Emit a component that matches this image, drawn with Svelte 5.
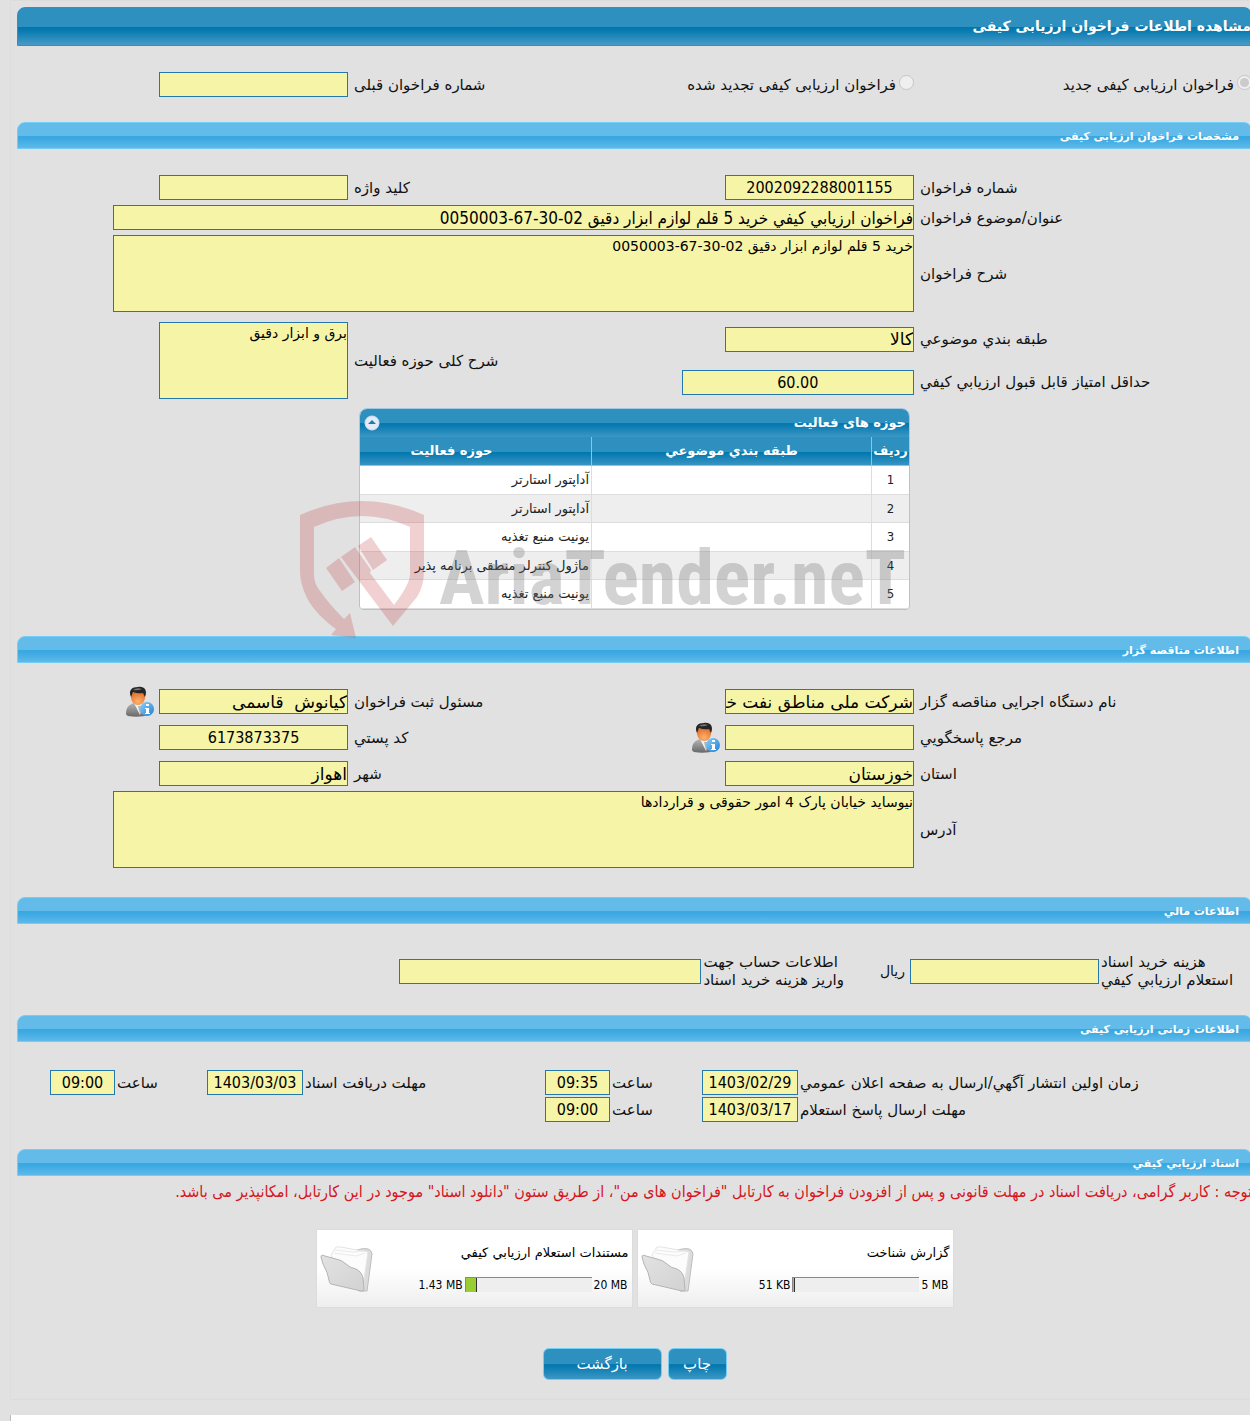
<script lang="ts">
	type FileCard = { title: string; used: string; limit: string; percent: number };

	const activities = [
		'آداپتور استارتر',
		'آداپتور استارتر',
		'یونیت منبع تغذیه',
		'ماژول کنترلر منطقی برنامه پذیر',
		'یونیت منبع تغذیه'
	];

	const files: FileCard[] = [
		{ title: 'گزارش شناخت', used: '51 KB', limit: '5 MB', percent: 1 },
		{ title: 'مستندات استعلام ارزيابي کيفي', used: '1.43 MB', limit: '20 MB', percent: 9 }
	];

	let open = $state(true);
</script>

{#snippet person(id: string)}
	<svg viewBox="0 0 28 31" width="28" height="31" aria-hidden="true">
		<defs>
			<linearGradient id="{id}-suit" x1="0" y1="0" x2="0" y2="1">
				<stop offset="0" stop-color="#b5b5b5" />
				<stop offset="1" stop-color="#686868" />
			</linearGradient>
			<radialGradient id="{id}-face" cx="0.5" cy="0.75" r="0.7">
				<stop offset="0" stop-color="#ffb36b" />
				<stop offset="1" stop-color="#e0702f" />
			</radialGradient>
			<linearGradient id="{id}-info" x1="0" y1="0" x2="1" y2="1">
				<stop offset="0" stop-color="#8fd0fa" />
				<stop offset="1" stop-color="#1c7fd6" />
			</linearGradient>
		</defs>
		<path d="M0 28C0 22 2 19 8 17h9c5 2 8 5 7 12q-12 3-22 1-2-1-2-2z" fill="url(#{id}-suit)" />
		<path d="M8 17l6 12 3-12q-4 3-9 0z" fill="#f2f2f2" />
		<path d="M12 20l2 9 2-9z" fill="#b5b5b5" />
		<path d="M5 7q6-3 14 0c1 7-2 12-7 12S4 14 5 7z" fill="url(#{id}-face)" />
		<path d="M5 11C2 4 6 1 12 1c6-1 10 3 7 10L17 7q-5 1-10-1z" fill="#252525" />
		<path d="M7 4q4-3 9-1-4 2-9 1z" fill="#777" />
		<circle cx="21" cy="23" r="7" fill="url(#{id}-info)" />
		<path d="M20 18h3v2h-3zM19 22h4v5h1v1h-5v-1h1v-4h-1z" fill="#fff" />
	</svg>
{/snippet}

{#snippet folder(id: string)}
	<svg viewBox="0 0 56 52" width="56" height="52" aria-hidden="true">
		<defs>
			<linearGradient id={id} x1="0" y1="0" x2="1" y2="1">
				<stop offset="0" stop-color="#e2e2e2" />
				<stop offset="1" stop-color="#d2d2d2" />
			</linearGradient>
		</defs>
		<path d="M33 8l8-2q10-2 11 5l-5 37-8 0z" fill="#dcdcdc" stroke="#bdbdbd" />
		<path d="M11 12l5-8 5 0 27 5-5 34-24-12z" fill="#fcfcfc" stroke="#e4e4e4" />
		<path d="M14 10l22 3 9-3M15 7l18 2 12-1" fill="none" stroke="#ebebeb" />
		<path d="M1 14q0-3 4-1l11 3q6 1 10 5t10 5q6 3 7 9l1 11q0 3-3 2L11 41q-2-1-2-4-1-7-6-16z" fill="url(#{id})" stroke="#b4b4b4" />
	</svg>
{/snippet}

<div class="screen" dir="rtl" lang="fa">
	<main class="page">
		<h1>مشاهده اطلاعات فراخوان ارزیابی کیفی</h1>

		<div class="form kinds">
			<label class="kind"><input type="radio" name="kind" checked disabled /><span>فراخوان ارزیابی کیفی جدید</span></label>
			<label class="kind second"><input type="radio" name="kind" disabled /><span>فراخوان ارزیابی کیفی تجدید شده</span></label>
			<label class="mid" for="previous">شماره فراخوان قبلی</label>
			<input id="previous" class="field" readonly />
		</div>

		<h2>مشخصات فراخوان ارزیابی کیفی</h2>
		<div class="form">
			<label for="number">شماره فراخوان</label>
			<input id="number" class="field number" value="2002092288001155" readonly />
			<label for="keyword">کلید واژه</label>
			<input id="keyword" class="field" readonly />

			<label class="start" for="subject">عنوان/موضوع فراخوان</label>
			<input id="subject" class="field wide" value="فراخوان ارزيابي کيفي خرید 5 قلم لوازم ابزار دقیق 02-30-67-0050003" readonly />

			<label class="start" for="description">شرح فراخوان</label>
			<textarea id="description" class="field wide" readonly>خرید 5 قلم لوازم ابزار دقیق 02-30-67-0050003</textarea>
		</div>

		<div class="form split">
			<label class="category" for="category">طبقه بندي موضوعي</label>
			<input id="category" class="field category-field" value="کالا" readonly />
			<label class="scope" for="scope">شرح کلی حوزه فعالیت</label>
			<textarea id="scope" class="field scope-field" readonly>برق و ابزار دقیق</textarea>
			<label class="start" for="score">حداقل امتیاز قابل قبول ارزیابي کیفي</label>
			<input id="score" class="field score number" value="60.00" readonly />
		</div>

		<div class="activity">
			<div class="panel-wrap">
				<div class="panel">
					<div class="panel-title">
						<span>حوزه های فعالیت</span>
						<button class="toggle" aria-label="جمع کردن" aria-expanded={open} onclick={() => (open = !open)}>
							<svg viewBox="0 0 16 16" width="16" height="16" aria-hidden="true">
								<circle cx="8" cy="8" r="7" fill="#e3ebf6" stroke="#d5dff0" />
								<path d="M4 9l4-4 4 4z" fill="#1b7eb3" />
							</svg>
						</button>
					</div>
					{#if open}
						<table>
							<thead>
								<tr>
									<th class="col-index">ردیف</th>
									<th>طبقه بندي موضوعي</th>
									<th class="col-area">حوزه فعالیت</th>
								</tr>
							</thead>
							<tbody>
								{#each activities as activity, i}
									<tr>
										<td class="col-index">{i + 1}</td>
										<td></td>
										<td>{activity}</td>
									</tr>
								{/each}
							</tbody>
						</table>
					{/if}
				</div>

				<svg class="watermark" viewBox="0 0 610 150" width="610" height="150" direction="ltr" aria-hidden="true">
					<g fill="#c1272d" fill-opacity="0.22">
						<path
							d="M2 23Q64-5 126 23V78Q126 94 119 105L95 134 43 65 57 55 73 78 72 81 96 113Q112 92 112 82V35Q64 13 16 35V82Q16 92 22 99C30 110 38 119 46 127L52 121 58 146 33 143 38 137C28 130 15 118 9 106Q2 92 2 79z"
						/>
						<path d="M28 76l13-10 16 24-13 9zM60 54l13-9 16 23-14 10z" />
					</g>
					<text x="141" y="112" class="watermark-text">AriaTender.neT</text>
				</svg>
			</div>
		</div>

		<h2>اطلاعات مناقصه گزار</h2>
		<div class="form owner">
			<label for="agency">نام دستگاه اجرایی مناقصه گزار</label>
			<input id="agency" class="field" value="شرکت ملی مناطق نفت خیز جنوب" readonly />
			<label for="registrar">مسئول ثبت فراخوان</label>
			<div class="with-icon">
				<input id="registrar" class="field" value="کیانوش  قاسمی" readonly />
				<button class="person" aria-label="اطلاعات مسئول">{@render person('registrar-icon')}</button>
			</div>

			<label class="start" for="contact">مرجع پاسخگویي</label>
			<div class="with-icon">
				<input id="contact" class="field" readonly />
				<button class="person" aria-label="اطلاعات مرجع">{@render person('contact-icon')}</button>
			</div>
			<label for="postal">کد پستي</label>
			<input id="postal" class="field number" value="6173873375" readonly />

			<label class="start" for="province">استان</label>
			<input id="province" class="field" value="خوزستان" readonly />
			<label for="city">شهر</label>
			<input id="city" class="field" value="اهواز" readonly />
		</div>
		<div class="form address">
			<label for="address">آدرس</label>
			<textarea id="address" class="field wide" readonly>نیوساید خیابان پارک 4 امور حقوقی و قراردادها</textarea>
		</div>

		<h2>اطلاعات مالي</h2>
		<div class="finance">
			<label for="fee">هزینه خرید اسناد<br />استعلام ارزیابي کیفي</label>
			<input id="fee" class="field" readonly />
			<span class="unit">ریال</span>
			<label for="account">اطلاعات حساب جهت<br />واریز هزینه خرید اسناد</label>
			<input id="account" class="field long" readonly />
		</div>

		<h2>اطلاعات زمانی ارزیابی کیفی</h2>
		<div class="times">
			<label for="publish">زمان اولین انتشار آگهي/ارسال به صفحه اعلان عمومي</label>
			<input id="publish" class="field number" value="1403/02/29" readonly />
			<label for="publish-time">ساعت</label>
			<input id="publish-time" class="field number" value="09:35" readonly />
			<label for="receive">مهلت دریافت اسناد</label>
			<input id="receive" class="field number" value="1403/03/03" readonly />
			<label for="receive-time">ساعت</label>
			<input id="receive-time" class="field number" value="09:00" readonly />

			<label class="start" for="reply">مهلت ارسال پاسخ استعلام</label>
			<input id="reply" class="field number" value="1403/03/17" readonly />
			<label for="reply-time">ساعت</label>
			<input id="reply-time" class="field number" value="09:00" readonly />
		</div>

		<h2>اسناد ارزیابي کیفي</h2>
		<p class="note">
			توجه : کاربر گرامی، دریافت اسناد در مهلت قانونی و پس از افزودن فراخوان به کارتابل "فراخوان های من"، از طریق ستون "دانلود اسناد" موجود در این کارتابل، امکانپذیر می باشد.
		</p>

		<div class="files">
			{#each files as file, i}
				<div class="file">
					<div class="file-info">
						<span class="file-title">{file.title}</span>
						<div class="usage" dir="ltr">
							<span>{file.used}</span>
							<div class="bar"><div class="bar-fill" style="width: {file.percent}%"></div></div>
							<span>{file.limit}</span>
						</div>
					</div>
					{@render folder(`folder-${i}`)}
				</div>
			{/each}
		</div>

		<div class="actions">
			<button class="action">چاپ</button>
			<button class="action back">بازگشت</button>
		</div>
	</main>
	<footer></footer>
</div>

<style>
	:global(body) {
		background: #e1e1e1;
	}

	.screen {
		overflow: hidden;
		font-family: 'DejaVu Sans', sans-serif;
		font-size: 15px;
		line-height: 18px;
		color: #111;
	}

	.page {
		box-sizing: border-box;
		margin: 0 -2px 15px 10px;
		padding: 6px 0 19px 6px;
		border: 1px solid #dcdcdc;
		border-right: 0;
	}

	h1,
	h2 {
		box-sizing: border-box;
		margin: 0;
		border: 1px solid #2b8fd0;
		border-radius: 8px 8px 0 0;
		background-origin: border-box;
		color: #fff;
	}

	h1 {
		height: 39px;
		font-size: 14px;
		line-height: 37px;
		background-image: linear-gradient(#2e90be 50%, #0076ae 52%, #0b7bb1 62%, #4b9dc9);
	}

	h2 {
		height: 27px;
		padding-right: 12px;
		border-color: #74cdf5;
		font-size: 11px;
		line-height: 28px;
		background-image: linear-gradient(#63bbea 50%, #38a7e0 52%, #3ca9e2 62%, #62bbea);
	}

	input,
	textarea,
	button {
		font: inherit;
	}

	.field {
		box-sizing: border-box;
		width: 100%;
		min-width: 0;
		height: 25px;
		margin: 0;
		padding: 0;
		border: 1px solid #2478ae;
		border-radius: 0;
		outline: 0;
		background: #f6f4a6;
		color: #000;
		font-size: 17px;
	}

	.field.number,
	.field.wide {
		font-family: 'DejaVu Sans Condensed', 'DejaVu Sans', sans-serif;
	}

	.field.number {
		font-size: 16px;
		text-align: center;
	}

	textarea.field,
	textarea.field.wide {
		display: block;
		height: 77px;
		resize: none;
		overflow: hidden;
		font-family: inherit;
		font-size: 14px;
		line-height: 20px;
	}

	.form {
		display: grid;
		grid-template-columns:
			minmax(0, 338fr) minmax(0, 189fr) minmax(0, 377fr) minmax(0, 189fr)
			minmax(0, 142fr);
		row-gap: 5px;
		align-items: center;
		padding-top: 26px;
	}

	.form > label {
		padding-left: 6px;
		text-align: left;
		white-space: nowrap;
	}

	.form > .start {
		grid-column: 1;
	}

	.form.kinds {
		padding-bottom: 25px;
	}

	.form > .kind {
		display: flex;
		align-items: center;
		gap: 3px;
	}

	.form > .second {
		grid-column: 2 / 4;
		grid-row: 1;
	}

	.kind input {
		width: 15px;
		height: 15px;
		margin: 0 0 4px;
	}

	.form > .mid {
		grid-column: 3;
		grid-row: 1;
	}

	.field.wide {
		grid-column: 2 / 6;
		width: 89.3%;
	}

	.form.split {
		row-gap: 9px;
		padding-top: 10px;
	}

	.category {
		grid-area: 1 / 1;
	}

	.category-field {
		grid-area: 1 / 2;
	}

	.scope {
		grid-area: 1 / 3 / 3 / 4;
	}

	.scope-field {
		grid-area: 1 / 4 / 3 / 5;
	}

	.field.score {
		width: 123%;
	}

	.form.owner {
		row-gap: 11px;
	}

	.form.address {
		padding: 5px 0 29px;
	}

	.with-icon {
		display: flex;
		align-items: center;
	}

	.with-icon .field {
		flex: 0 0 100%;
	}

	.person {
		display: flex;
		flex: none;
		height: 25px;
		align-items: center;
		margin-right: 5px;
		padding: 0;
		border: 0;
		background: none;
	}

	.activity {
		display: flex;
		justify-content: center;
		padding: 9px 0 26px;
	}

	.panel-wrap {
		position: relative;
		width: 551px;
	}

	.panel {
		overflow: hidden;
		border: 1px solid #a3c8e3;
		border-radius: 8px 8px 4px 4px;
		background: #fff;
	}

	.panel-title {
		display: flex;
		justify-content: space-between;
		align-items: center;
		height: 28px;
		padding: 0 3px 0 4px;
		color: #fff;
		font-size: 13px;
		font-weight: bold;
		background: linear-gradient(#2e90be 50%, #0076ae 52%, #3c97c4);
	}

	.toggle {
		display: flex;
		padding: 0;
		border: 0;
		background: none;
	}

	table {
		width: 100%;
		border-collapse: separate;
		border-spacing: 0;
		table-layout: fixed;
		font-size: 13px;
	}

	thead tr {
		height: 29px;
		background: linear-gradient(#2e90be 50%, #0076ae 52%, #3c97c4);
	}

	th,
	td {
		box-sizing: border-box;
		padding: 0 2px;
	}

	th {
		border-bottom: 1px solid #74cdf5;
		border-left: 1px solid #74cdf5;
		color: #fff;
	}

	th.col-area {
		width: 231px;
		padding-right: 50px;
	}

	.col-index {
		width: 38px;
		padding: 0;
		text-align: center;
	}

	td {
		height: 28px;
		border-bottom: 1px solid #ddd;
		border-left: 1px solid #ddd;
		color: #222;
	}

	th:last-child,
	td:last-child {
		border-left: 0;
	}

	tbody tr:nth-child(even) {
		background: #eee;
	}

	tbody tr:nth-child(odd) td {
		height: 29px;
	}

	td.col-index {
		font-family: 'DejaVu Sans Condensed', 'DejaVu Sans', sans-serif;
	}

	.watermark {
		position: absolute;
		bottom: -32px;
		left: -61px;
		pointer-events: none;
	}

	.watermark-text {
		font-family: 'Liberation Sans Narrow', 'Roboto Condensed', 'Liberation Sans', sans-serif;
		font-size: 76px;
		font-weight: bold;
		fill: #777;
		fill-opacity: 0.32;
	}

	.finance {
		display: flex;
		align-items: center;
		gap: 2px;
		padding: 29px 14px 26px 0;
	}

	.finance label {
		min-width: 137px;
		box-sizing: border-box;
		white-space: nowrap;
		text-align: left;
	}

	.finance .field {
		width: 189px;
	}

	.finance .field.long {
		width: 302px;
	}

	.unit {
		margin: 0 3px 0 34px;
		font-size: 14px;
	}

	.times {
		display: grid;
		grid-template-columns:
			minmax(0, 454fr) 96px minmax(0, 92fr) 65px minmax(0, 242fr)
			96px minmax(0, 92fr) 65px minmax(0, 33fr);
		row-gap: 2px;
		align-items: center;
		padding: 28px 0 27px;
	}

	.times label {
		padding-left: 2px;
		text-align: left;
		white-space: nowrap;
	}

	.times .start {
		grid-column: 1;
	}

	.note {
		margin: 7px 0 28px;
		color: #d8141c;
		font-family: 'DejaVu Sans Condensed', 'DejaVu Sans', sans-serif;
		font-size: 16px;
		white-space: nowrap;
	}

	.files {
		display: flex;
		justify-content: center;
		gap: 4px;
	}

	.file {
		box-sizing: border-box;
		display: flex;
		justify-content: space-between;
		align-items: center;
		width: 317px;
		height: 79px;
		padding: 0 3px;
		border: 1px solid #dcdcdc;
		background: linear-gradient(#fff 50%, #eee);
		color: #000;
	}

	.file-info {
		display: flex;
		flex-direction: column;
		gap: 14px;
	}

	.file-title {
		font-size: 13px;
	}

	.usage {
		display: flex;
		align-items: center;
		justify-content: flex-end;
		gap: 2px;
		padding-right: 1px;
		font-family: 'DejaVu Sans Condensed', 'DejaVu Sans', sans-serif;
		font-size: 12px;
	}

	.bar {
		box-sizing: border-box;
		width: 127px;
		height: 15px;
		border-top: 1px solid #888;
		border-left: 1px solid #888;
		background: #eee;
	}

	.bar-fill {
		box-sizing: border-box;
		height: 100%;
		border-right: 1px solid #333;
		background: #9acd32;
	}

	.actions {
		display: flex;
		justify-content: center;
		gap: 6px;
		margin-top: 40px;
	}

	.action {
		box-sizing: border-box;
		min-width: 59px;
		height: 32px;
		padding: 0;
		border: 1px solid #74cdf5;
		border-radius: 6px;
		color: #fff;
		background: linear-gradient(#2e90be 50%, #0076ae 52%, #3c97c4);
	}

	.action.back {
		min-width: 119px;
	}

	footer {
		height: 6px;
		margin-left: 10px;
		border-left: 1px solid #bbb;
		background: #fff;
	}
</style>
